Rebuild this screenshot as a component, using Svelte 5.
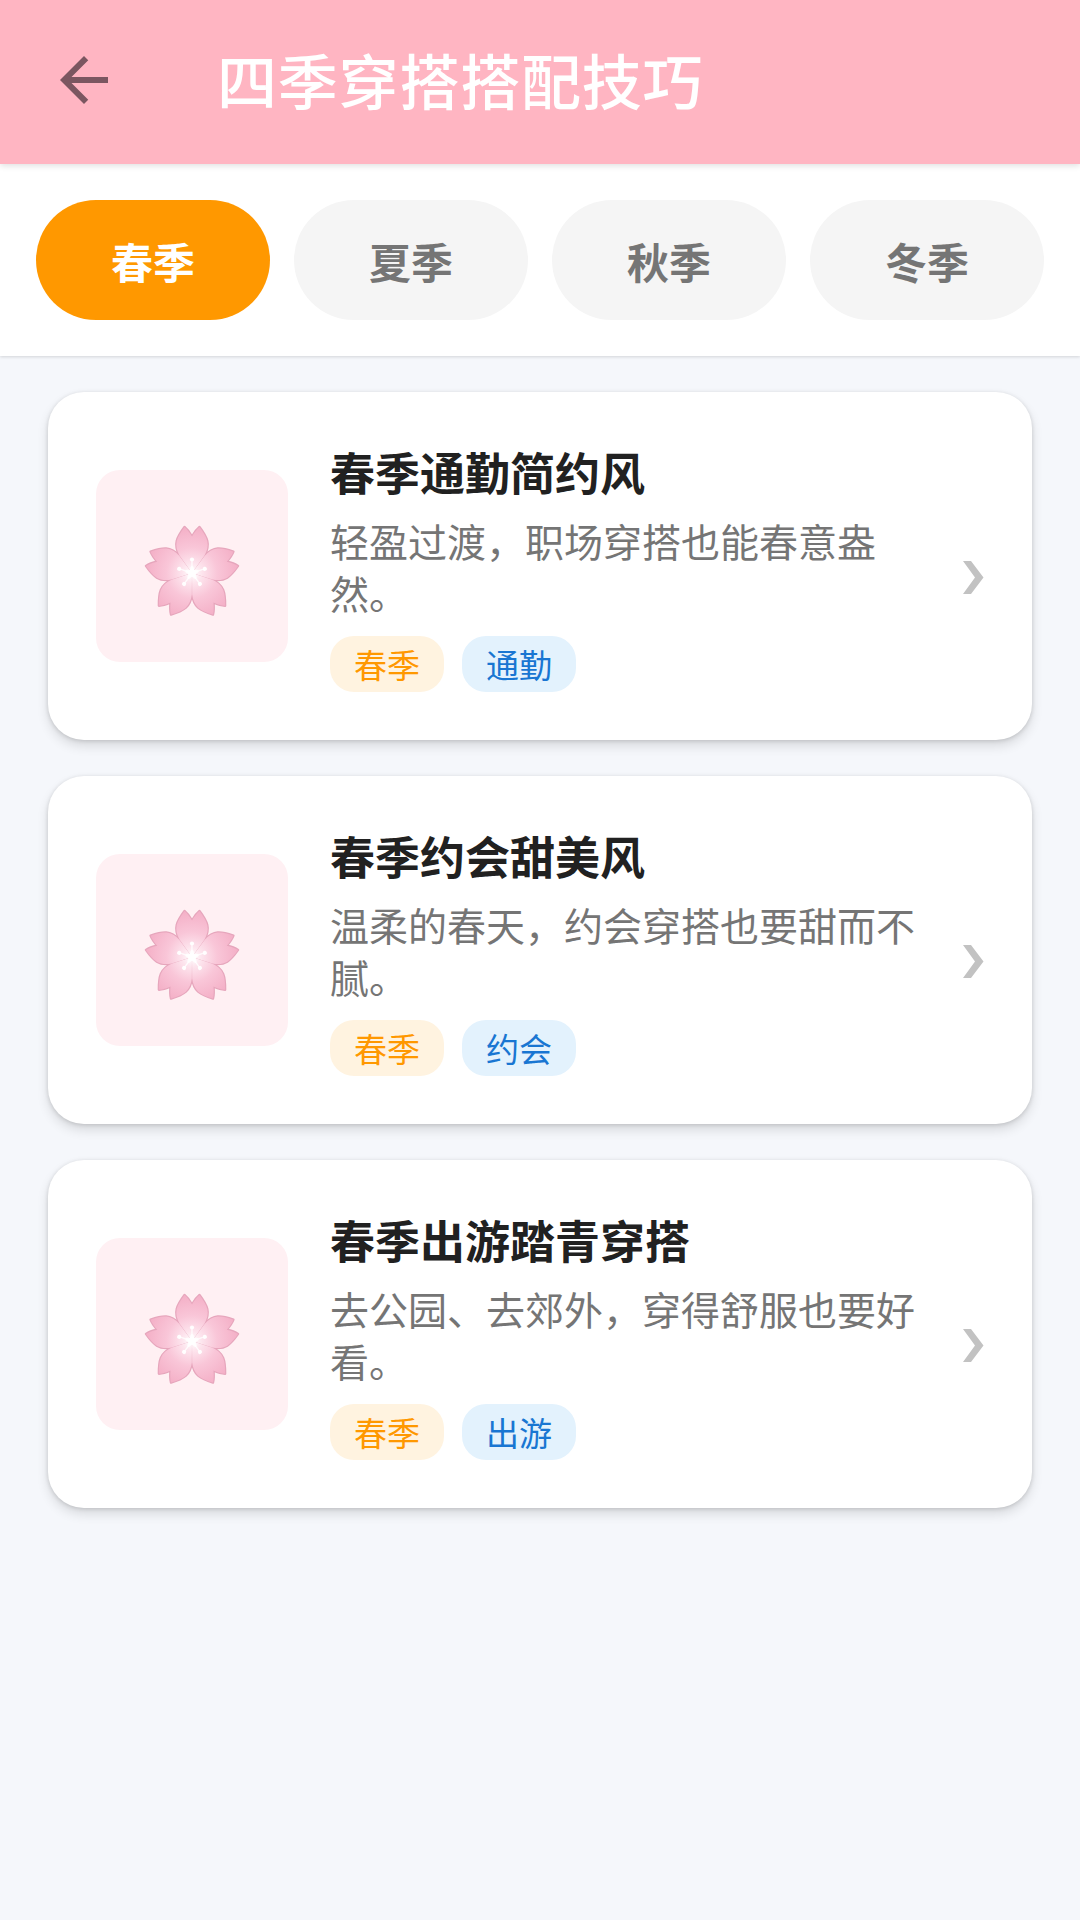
<script>
  const tabs = ["春季", "夏季", "秋季", "冬季"];
  const cards = [
    { title: "春季通勤简约风", desc: "轻盈过渡，职场穿搭也能春意盎然。", tag: "通勤" },
    { title: "春季约会甜美风", desc: "温柔的春天，约会穿搭也要甜而不腻。", tag: "约会" },
    { title: "春季出游踏青穿搭", desc: "去公园、去郊外，穿得舒服也要好看。", tag: "出游" }
  ];
  const angles = [0, 72, 144, 216, 288];
  const petal = "M0,0 L-12.500,-17.500 C-15,-22 -16.500,-27 -15.300,-32 C-14,-37 -10.500,-42 -7.500,-46 C-5,-44 -2,-40 0,-36.500 C2,-40 5,-44 7.500,-46 C10.500,-42 14,-37 15.300,-32 C16.500,-27 15,-22 12.500,-17.500 Z";
</script>

<svg class="defs" width="0" height="0" aria-hidden="true">
  <defs>
    <radialGradient id="petalFill" gradientUnits="userSpaceOnUse" cx="0" cy="0" r="46">
      <stop offset="0" stop-color="#ffffff" />
      <stop offset="0.22" stop-color="#fde4ed" />
      <stop offset="0.55" stop-color="#f9c6d8" />
      <stop offset="1" stop-color="#f4b0c7" />
    </radialGradient>
  </defs>
</svg>

<div class="page" lang="zh-CN">
  <header class="toolbar">
    <svg class="back" viewBox="0 0 24 24" width="72" height="72">
      <path d="M20 11H7.830l5.590-5.590L12 4l-8 8 8 8 1.410-1.410L7.830 13H20v-2z" />
    </svg>
    <h1>四季穿搭搭配技巧</h1>
  </header>

  <nav class="tabs">
    {#each tabs as tab, i}
      <div class="tab" class:active={i === 0}>{tab}</div>
    {/each}
  </nav>

  <main class="list">
    {#each cards as card}
      <article class="card">
        <div class="thumb">
          <svg viewBox="-50 -50 100 100" width="100" height="100">
            {#each angles as a}
              <path d={petal} transform="rotate({a})" fill="#e6a6bc" stroke="#e6a6bc" stroke-width="2.400" stroke-linejoin="round" />
            {/each}
            {#each angles as a}
              <path d={petal} transform="rotate({a})" fill="url(#petalFill)" />
            {/each}
            <circle r="4" fill="#fff" opacity="0.85" />
            {#each angles as a}
              <g transform="rotate({a})">
                <line x1="0" y1="0" x2="0" y2="-13" stroke="#fff" stroke-width="1.300" opacity="0.85" />
                <circle cy="-13.500" r="2.100" fill="#fff" opacity="0.95" />
                <ellipse cy="-3" rx="2" ry="4" fill="#fff" opacity="0.8" />
              </g>
            {/each}
          </svg>
        </div>
        <div class="body">
          <h2>{card.title}</h2>
          <p>{card.desc}</p>
          <div class="tags">
            <span class="tag season">春季</span>
            <span class="tag kind">{card.tag}</span>
          </div>
        </div>
        <svg class="chevron" viewBox="0 0 22 33" width="22" height="33">
          <path d="M1 0h8l12.500 16.500L9 33H1l12-16.500z" />
        </svg>
      </article>
    {/each}
  </main>
</div>

<style>
  :global(body) {
    margin: 0;
    background: #f5f7fb;
  }

  .defs {
    position: absolute;
  }

  .page {
    min-height: 1920px;
    background: #f5f7fb;
    font-family: "Noto Sans CJK SC", "Noto Sans", sans-serif;
  }

  .toolbar {
    height: 164px;
    background: #ffb5c2;
    display: flex;
    align-items: center;
    padding-left: 48px;
    padding-bottom: 4px;
    box-sizing: border-box;
    position: relative;
    z-index: 2;
    box-shadow: 0 2px 6px rgba(0, 0, 0, 0.12);
  }

  .back {
    flex: none;
    margin-right: 97px;
  }

  .back path {
    fill: #7b5660;
  }

  h1 {
    margin: -2px 0 0;
    font-size: 60px;
    font-weight: 500;
    letter-spacing: 0.8px;
    color: #fff;
    line-height: 80px;
  }

  .tabs {
    height: 192px;
    box-sizing: border-box;
    background: #fff;
    display: flex;
    gap: 24px;
    padding: 36px;
    position: relative;
    box-shadow: 0 1px 3px rgba(0, 0, 0, 0.14);
  }

  .tab {
    flex: 1;
    height: 120px;
    border-radius: 60px;
    background: #f5f5f5;
    color: #757575;
    font-size: 42px;
    font-weight: 700;
    display: flex;
    align-items: center;
    justify-content: center;
  }

  .tab.active {
    background: #ff9800;
    color: #fff;
  }

  .list {
    padding: 36px 48px;
    display: flex;
    flex-direction: column;
    gap: 36px;
  }

  .card {
    height: 348px;
    box-sizing: border-box;
    background: #fff;
    border-radius: 36px;
    box-shadow: 0 6px 12px rgba(0, 0, 0, 0.12), 0 1px 4px rgba(0, 0, 0, 0.14);
    display: flex;
    align-items: center;
    padding: 0 48px;
  }

  .thumb {
    flex: none;
    width: 192px;
    height: 192px;
    border-radius: 24px;
    background: #fff0f3;
    display: flex;
    align-items: center;
    justify-content: center;
    margin-right: 42px;
  }

  .thumb svg {
    margin: 14px 1px 0 0;
    filter: blur(0.4px);
  }

  .body {
    flex: 1;
    min-width: 0;
    padding-top: 2px;
  }

  h2 {
    margin: 0;
    font-size: 45px;
    line-height: 60px;
    font-weight: 700;
    color: #212121;
  }

  p {
    margin: 12px 0 18px;
    font-size: 39px;
    line-height: 52px;
    color: #757575;
  }

  .tags {
    display: flex;
    gap: 18px;
  }

  .tag {
    height: 56px;
    line-height: 56px;
    padding: 0 24px;
    border-radius: 24px;
    font-size: 33px;
  }

  .season {
    background: #fff3e0;
    color: #ff9800;
  }

  .kind {
    background: #e3f2fd;
    color: #1976d2;
  }

  .chevron {
    flex: none;
    margin-left: 32px;
    margin-top: 23px;
  }

  .chevron path {
    fill: #c2c2c2;
  }
</style>
